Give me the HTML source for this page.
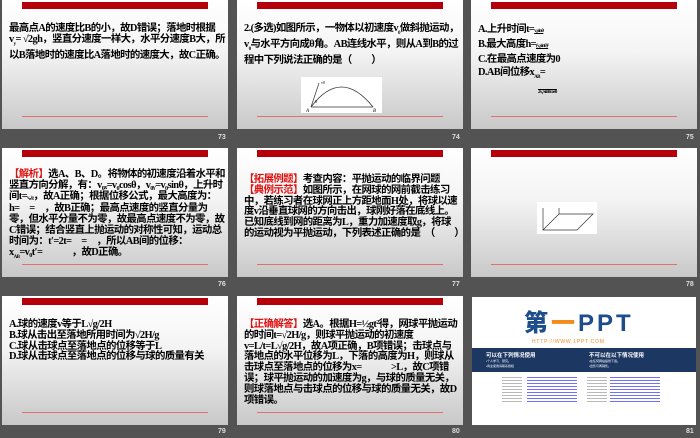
<!DOCTYPE html>
<html><head><meta charset="utf-8"><style>
*{margin:0;padding:0;box-sizing:border-box}
body{width:700px;height:438px;background:#535353;position:relative;overflow:hidden;font-family:"Liberation Serif","Noto Serif CJK SC",serif}
.s{position:absolute;width:226px;height:129px;background:linear-gradient(#fff 0%,#f4f4f4 40%,#c8c8c8 100%);overflow:hidden}
.s .bar{position:absolute;left:20px;top:2px;width:186px;height:7px;background:#b5000c}
.s .ln{position:absolute;left:20px;top:116px;width:186px;height:1px;background:#e07070}
.t{position:absolute;left:7px;top:24px;width:216px;font-size:10.4px;line-height:10.8px;font-weight:bold;color:#000;letter-spacing:-0.6px;font-family:"Liberation Serif","Noto Sans CJK SC",sans-serif}
.r{color:#e01010}
.n{position:absolute;font-family:"Liberation Sans",sans-serif;font-size:7px;font-weight:bold;color:#ddd}
sub{font-size:5px}
</style></head><body>
<!-- row 1 -->
<div class="s" style="left:2px;top:0"><div class="bar"></div><div class="ln"></div>
<div class="t">最高点A的速度比B的小，故D错误；落地时根据v<sub>y</sub>= √2gh，竖直分速度一样大，水平分速度B大，所以B落地时的速度比A落地时的速度大，故C正确。</div></div>
<div class="s" style="left:237px;top:0"><div class="bar"></div><div class="ln"></div>
<div class="t">2.(多选)如图所示，一物体以初速度v<sub>0</sub>做斜抛运动，v<sub>0</sub>与水平方向成θ角。AB连线水平，则从A到B的过程中下列说法正确的是（　　）</div>
<svg style="position:absolute;left:64px;top:77px" width="81" height="36"><rect width="81" height="36" fill="#fff"/><path d="M10 30 Q40 -10 72 30" fill="none" stroke="#333" stroke-width="0.8"/><path d="M10 30 L72 30 M10 30 L18 6" stroke="#333" stroke-width="0.7"/><text x="5" y="35" font-size="5" font-style="italic">A</text><text x="72" y="35" font-size="5" font-style="italic">B</text><text x="20" y="7" font-size="4">v0</text><text x="14" y="26" font-size="4">θ</text></svg></div>
<div class="s" style="left:471px;top:0"><div class="bar"></div><div class="ln"></div>
<div class="t" style="line-height:13px;top:23px">A.上升时间t=<span style="font-size:5px;text-decoration:underline">v₀sinθ</span><br>B.最大高度h=<span style="font-size:5px;text-decoration:underline">(v₀sinθ)²</span><br>C.在最高点速度为0<br>D.AB间位移x<sub>AB</sub>=<br><span style="font-size:5px;margin-left:60px;text-decoration:overline">2v₀²sinθcosθ</span></div></div>
<div class="n" style="left:218px;top:134px">73</div>
<div class="n" style="left:452px;top:134px">74</div>
<div class="n" style="left:686px;top:134px">75</div>
<!-- row 2 -->
<div class="s" style="left:2px;top:148px"><div class="bar"></div><div class="ln"></div>
<div class="t" style="top:22px"><span class="r">【解析】</span>选A、B、D。将物体的初速度沿着水平和竖直方向分解，有：v₀ₓ=v₀cosθ，v₀ᵧ=v₀sinθ，上升时间t=<span style="font-size:5px">v₀ᵧ/g</span>，故A正确；根据位移公式，最大高度为：h=　=　，故B正确；最高点速度的竖直分量为零，但水平分量不为零，故最高点速度不为零，故C错误；结合竖直上抛运动的对称性可知，运动总时间为：t′=2t=　=　，所以AB间的位移：x<sub>AB</sub>=v₀t′=　　　，故D正确。</div></div>
<div class="s" style="left:237px;top:148px"><div class="bar"></div><div class="ln"></div>
<div class="t" style="top:27px"><span class="r">【拓展例题】</span>考查内容：平抛运动的临界问题<br><span class="r">【典例示范】</span>如图所示，在网球的网前截击练习中，若练习者在球网正上方距地面H处，将球以速度v沿垂直球网的方向击出，球刚好落在底线上。已知底线到网的距离为L，重力加速度取g，将球的运动视为平抛运动，下列表述正确的是　（　　）</div></div>
<div class="s" style="left:471px;top:148px"><div class="bar"></div><div class="ln"></div>
<svg style="position:absolute;left:66px;top:54px" width="60" height="32"><rect width="60" height="32" fill="#fff"/><path d="M6 28 L22 12 L56 12 L40 28 Z M6 28 L6 6 M22 12 L22 6" fill="none" stroke="#333" stroke-width="0.7"/></svg></div>
<div class="n" style="left:218px;top:281px">76</div>
<div class="n" style="left:452px;top:281px">77</div>
<div class="n" style="left:686px;top:281px">78</div>
<!-- row 3 -->
<div class="s" style="left:2px;top:296px"><div class="bar"></div><div class="ln"></div>
<div class="t" style="top:24px">A.球的速度v等于L√g/2H<br>B.球从击出至落地所用时间为√2H/g<br>C.球从击球点至落地点的位移等于L<br>D.球从击球点至落地点的位移与球的质量有关</div></div>
<div class="s" style="left:237px;top:296px"><div class="bar"></div><div class="ln"></div>
<div class="t" style="top:24px"><span class="r">【正确解答】</span>选A。根据H=½gt²得，网球平抛运动的时间t=√2H/g，则球平抛运动的初速度v=L/t=L√g/2H，故A项正确，B项错误；击球点与落地点的水平位移为L，下落的高度为H，则球从击球点至落地点的位移为x=　　　>L，故C项错误；球平抛运动的加速度为g，与球的质量无关，则球落地点与击球点的位移与球的质量无关，故D项错误。</div></div>
<div style="position:absolute;left:472px;top:297px;width:224px;height:128px;background:#fff;overflow:hidden;font-family:'Liberation Sans','Noto Sans CJK SC',sans-serif">
<div style="position:absolute;left:52px;top:14px;font-size:24px;font-weight:900;color:#1e4d8c;letter-spacing:3px;line-height:26px">第<span style="color:#f28a1c">一</span>PPT</div>
<div style="position:absolute;left:60px;top:42px;font-size:5px;color:#f28a1c;letter-spacing:0.8px">HTTP://WWW.1PPT.COM</div>
<div style="position:absolute;left:0;top:51px;width:224px;height:24px;background:#1c3762;color:#fff">
<div style="position:absolute;left:14px;top:3px;font-size:5.5px;font-weight:bold">可以在下列情况使用</div>
<div style="position:absolute;left:117px;top:3px;font-size:5.5px;font-weight:bold">不可以在以下情况使用</div>
<div style="position:absolute;left:14px;top:11px;font-size:3px;line-height:5px">•个人学习、研究。<br>•商业使用请联系授权</div>
<div style="position:absolute;left:117px;top:11px;font-size:3px;line-height:5px">•在任何网站提供下载。<br>•出售与再销售。</div></div>
<div style="position:absolute;left:30px;top:80px;width:20px;height:26px;background:repeating-linear-gradient(#888 0 1px,#fff 1px 3px);opacity:.6"></div>
<div style="position:absolute;left:55px;top:80px;width:50px;height:26px;background:repeating-linear-gradient(#33f 0 1px,#fff 1px 3px);opacity:.7"></div>
<div style="position:absolute;left:115px;top:80px;width:20px;height:26px;background:repeating-linear-gradient(#888 0 1px,#fff 1px 3px);opacity:.6"></div>
<div style="position:absolute;left:138px;top:80px;width:50px;height:26px;background:repeating-linear-gradient(#33f 0 1px,#fff 1px 3px);opacity:.7"></div>
</div>
<div class="n" style="left:218px;top:428px">79</div>
<div class="n" style="left:452px;top:428px">80</div>
<div class="n" style="left:686px;top:428px">81</div>
</body></html>
